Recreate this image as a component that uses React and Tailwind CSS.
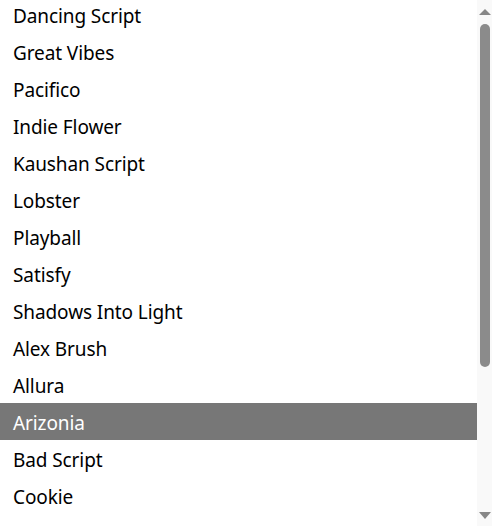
const fonts = [
  "Dancing Script",
  "Great Vibes",
  "Pacifico",
  "Indie Flower",
  "Kaushan Script",
  "Lobster",
  "Playball",
  "Satisfy",
  "Shadows Into Light",
  "Alex Brush",
  "Allura",
  "Arizonia",
  "Bad Script",
  "Cookie",
];

const selected = "Arizonia";

function Scrollbar() {
  return (
    <div className="flex w-[15px] shrink-0 flex-col items-center bg-[#f9f9f9]">
      <div className="mt-[9px] h-0 w-0 border-x-[6px] border-b-[6px] border-x-transparent border-b-[#878787]" />
      <div className="mt-[9px] h-[343px] w-[10px] rounded-full bg-[#8b8b8b]" />
      <div className="flex-1" />
      <div className="mb-[7px] h-0 w-0 border-x-[6px] border-t-[7px] border-x-transparent border-t-[#878787]" />
    </div>
  );
}

export default function App() {
  return (
    <div
      className="flex h-[526px] w-[492px] overflow-hidden bg-white"
      style={{ fontFamily: '"Noto Sans", "Open Sans", sans-serif' }}
    >
      <div className="flex-1 overflow-hidden">
        <ul className="-mt-1">
          {fonts.map((name) => (
            <li
              key={name}
              className={
                name === selected
                  ? "flex h-[37px] items-center bg-[#777777] pl-[13px] pt-[4px] text-[19px] tracking-[-0.1px] text-white"
                  : "flex h-[37px] items-center pl-[13px] pt-[4px] text-[19px] tracking-[-0.1px] text-black"
              }
            >
              {name}
            </li>
          ))}
        </ul>
      </div>
      <Scrollbar />
    </div>
  );
}
